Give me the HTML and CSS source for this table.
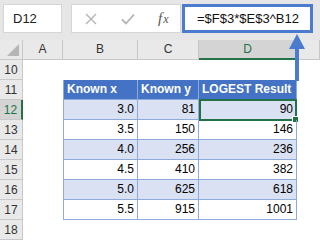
FILE: index.html
```html
<!DOCTYPE html>
<html lang="en">
<head>
    <meta charset="UTF-8">
    <title>LOGEST example</title>
    <link rel="stylesheet" href="styles.css">
</head>
<body>
    <div class="formula-bar">
        <div class="name-box">D12</div>
        <div class="fx-tools">
            <svg class="tool" width="12" height="12" viewBox="0 0 12 12"><path d="M1 1L11 11M11 1L1 11" stroke="#b3b3b3" stroke-width="1.4" fill="none"/></svg>
            <svg class="tool" width="14" height="12" viewBox="0 0 14 12"><path d="M1 6.5L5 10.5L13 1.5" stroke="#b3b3b3" stroke-width="1.8" fill="none"/></svg>
            <span class="fx"><i>f</i><i class="fx-x">x</i></span>
        </div>
        <div class="formula">=$F$3*$E$3^B12</div>
    </div>

    <div class="sheet">
        <div class="corner"></div>
        <div class="ch">A</div>
        <div class="ch">B</div>
        <div class="ch">C</div>
        <div class="ch ch-active">D</div>
        <div class="ch"></div>

        <div class="rh">10</div>
        <div></div><div></div><div></div><div></div><div></div>

        <div class="rh">11</div>
        <div></div>
        <div class="th first">Known x</div>
        <div class="th">Known y</div>
        <div class="th">LOGEST Result</div>
        <div></div>

        <div class="rh rh-active">12</div>
        <div></div>
        <div class="td alt first">3.0</div>
        <div class="td alt">81</div>
        <div class="td alt selected">90<span class="handle"></span></div>
        <div></div>

        <div class="rh">13</div>
        <div></div>
        <div class="td first">3.5</div>
        <div class="td">150</div>
        <div class="td">146</div>
        <div></div>

        <div class="rh">14</div>
        <div></div>
        <div class="td alt first">4.0</div>
        <div class="td alt">256</div>
        <div class="td alt">236</div>
        <div></div>

        <div class="rh">15</div>
        <div></div>
        <div class="td first">4.5</div>
        <div class="td">410</div>
        <div class="td">382</div>
        <div></div>

        <div class="rh">16</div>
        <div></div>
        <div class="td alt first">5.0</div>
        <div class="td alt">625</div>
        <div class="td alt">618</div>
        <div></div>

        <div class="rh">17</div>
        <div></div>
        <div class="td first">5.5</div>
        <div class="td">915</div>
        <div class="td">1001</div>
        <div></div>

        <div class="rh">18</div>
        <div></div><div></div><div></div><div></div><div></div>
    </div>

    <!-- callout arrow from the table to the formula -->
    <svg class="callout" width="16" height="48" viewBox="0 0 16 48">
        <polygon points="8,1 0,16 16,16" fill="#4a7bcf"/>
        <rect x="6" y="14" width="4" height="34" fill="#4a7bcf"/>
    </svg>
</body>
</html>
```

FILE: styles.css
```css
body {
    margin: 0;
    width: 320px;
    height: 241px;
    overflow: hidden;
    position: relative;
    background: #fff;
    font-family: 'Liberation Sans', Arial, sans-serif;
    color: #000;
}

.formula-bar {
    display: flex;
    align-items: flex-start;
    height: 40px;
    padding-top: 4px;
    box-sizing: border-box;
    background: #e6e6e6;
}

.name-box {
    margin-left: 3px;
    width: 59px;
    height: 29px;
    box-sizing: border-box;
    background: #fff;
    border: 1px solid #d5d5d5;
    padding-left: 9px;
    font-size: 13px;
    line-height: 27px;
    color: #222;
}

.fx-tools {
    margin-left: 9px;
    width: 110px;
    height: 29px;
    box-sizing: border-box;
    background: #fff;
    border: 1px solid #d5d5d5;
    display: flex;
    align-items: center;
    padding-left: 13px;
}

.tool + .tool {
    margin-left: 24px;
}

.fx {
    margin-left: 23px;
    font-family: 'Liberation Serif', 'Times New Roman', serif;
    font-size: 15px;
    color: #555;
}

.fx-x {
    font-size: 12px;
    margin-left: 1px;
}

.formula {
    margin-left: 1px;
    width: 131px;
    height: 29px;
    box-sizing: border-box;
    background: #fff;
    border: 3px solid #4a7bcf;
    padding-left: 12px;
    font-size: 13px;
    line-height: 23px;
    color: #111;
}

.sheet {
    display: grid;
    grid-template-columns: 23px 40px 75px 61px 98px 1fr;
    grid-template-rows: 20px repeat(9, 20px);
}

.sheet > div {
    box-sizing: border-box;
    position: relative;
}

.corner {
    background: #e9e9e9;
    border-right: 1px solid #c8c8c8;
    border-bottom: 1px solid #c8c8c8;
}

.corner::after {
    content: '';
    position: absolute;
    right: 3px;
    bottom: 3px;
    border-left: 12px solid transparent;
    border-bottom: 12px solid #b5b5b5;
}

.ch {
    background: #e9e9e9;
    border-right: 1px solid #c8c8c8;
    border-bottom: 1px solid #c8c8c8;
    text-align: center;
    font-size: 12px;
    line-height: 19px;
    color: #333;
}

.ch-active {
    background: #d4d4d4;
    color: #217346;
    border-bottom: 2px solid #217346;
}

.rh {
    background: #e9e9e9;
    border-right: 1px solid #c8c8c8;
    border-bottom: 1px solid #c8c8c8;
    text-align: center;
    font-size: 12px;
    line-height: 20px;
    color: #333;
}

.rh-active {
    background: #d4d4d4;
    color: #217346;
    border-right: 2px solid #217346;
}

.th {
    background: #4472c4;
    color: #fff;
    font-weight: bold;
    font-size: 12px;
    line-height: 19px;
    padding-left: 3px;
    border-right: 1px solid #8ea9db;
    border-bottom: 1px solid #8ea9db;
    white-space: nowrap;
}

.td {
    text-align: right;
    font-size: 12px;
    line-height: 19px;
    padding-right: 3px;
    border-right: 1px solid #8ea9db;
    border-bottom: 1px solid #8ea9db;
}

.first {
    border-left: 1px solid #8ea9db;
}

.alt {
    background: #d9e1f2;
}

.selected {
    border: 2px solid #217346;
    line-height: 17px;
    margin-top: -1px;
    height: 22px;
    padding-right: 2px;
}

.handle {
    position: absolute;
    right: -4px;
    bottom: -4px;
    width: 5px;
    height: 5px;
    background: #217346;
    border: 1px solid #fff;
}

.callout {
    position: absolute;
    left: 289px;
    top: 33px;
}
```
